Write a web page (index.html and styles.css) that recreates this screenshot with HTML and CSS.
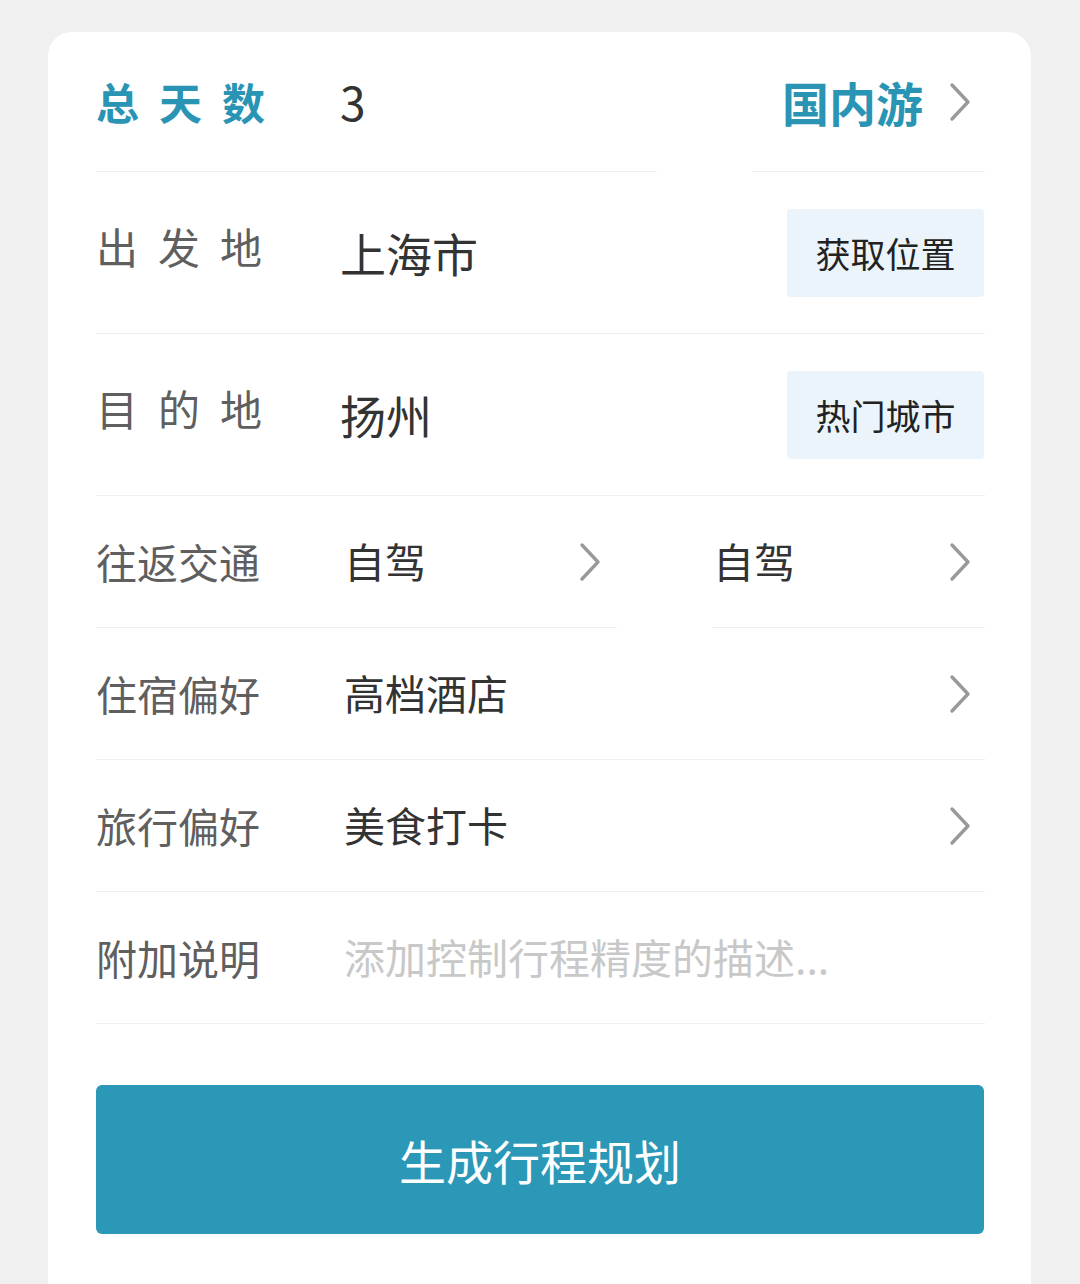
FILE: index.html
```html
<!DOCTYPE html>
<html lang="zh-CN">
<head>
    <meta charset="UTF-8">
    <meta name="viewport" content="width=device-width, initial-scale=1.0">
    <title>行程规划</title>
    <link rel="stylesheet" href="styles.css">
</head>
<body>
    <div class="card">
        <!-- 天数 + 出行类型 -->
        <div class="row row-top split">
            <div class="cell cell-days">
                <span class="label spaced accent">总天数</span>
                <span class="value big">3</span>
            </div>
            <div class="cell cell-type">
                <span class="type-text">国内游</span>
                <svg class="chevron" viewBox="0 0 22 40"><path d="M3 3 L19 20 L3 37"/></svg>
            </div>
        </div>

        <div class="row row-tall">
            <span class="label spaced raised">出发地</span>
            <span class="value big">上海市</span>
            <button class="chip">获取位置</button>
        </div>

        <div class="row row-tall">
            <span class="label spaced raised">目的地</span>
            <span class="value big">扬州</span>
            <button class="chip">热门城市</button>
        </div>

        <!-- 去程 / 返程 -->
        <div class="row split">
            <div class="cell cell-go">
                <span class="label">往返交通</span>
                <span class="value">自驾</span>
                <svg class="chevron" viewBox="0 0 22 40"><path d="M3 3 L19 20 L3 37"/></svg>
            </div>
            <div class="cell cell-back">
                <span class="value">自驾</span>
                <svg class="chevron" viewBox="0 0 22 40"><path d="M3 3 L19 20 L3 37"/></svg>
            </div>
        </div>

        <div class="row">
            <span class="label">住宿偏好</span>
            <span class="value">高档酒店</span>
            <svg class="chevron" viewBox="0 0 22 40"><path d="M3 3 L19 20 L3 37"/></svg>
        </div>

        <div class="row">
            <span class="label">旅行偏好</span>
            <span class="value">美食打卡</span>
            <svg class="chevron" viewBox="0 0 22 40"><path d="M3 3 L19 20 L3 37"/></svg>
        </div>

        <div class="row">
            <span class="label">附加说明</span>
            <span class="value placeholder">添加控制行程精度的描述...</span>
        </div>

        <button class="submit">生成行程规划</button>
    </div>
</body>
</html>
```

FILE: styles.css
```css
body {
    margin: 0;
    padding: 32px 49px 0 48px;
    background-color: #f0f0f0;
    font-family: "Noto Sans CJK SC", "Noto Sans", sans-serif;
    color: #333;
}
.card {
    background-color: #fff;
    border-radius: 24px 24px 0 0;
    padding: 0 46px 60px 48px;
    min-height: 1300px;
    box-sizing: border-box;
}
.row {
    display: flex;
    align-items: center;
    height: 132px;
    border-bottom: 1px solid #eeeeee;
    box-sizing: border-box;
}
.row-top {
    height: 140px;
}
.row-tall {
    height: 162px;
}
.row.split {
    border-bottom: none;
    justify-content: space-between;
}
.cell {
    display: flex;
    align-items: center;
    height: 100%;
    border-bottom: 1px solid #eeeeee;
    box-sizing: border-box;
}
.cell-days {
    width: 561px;
}
.cell-type {
    width: 233px;
    justify-content: flex-end;
    padding-right: 14px;
}
.cell-go {
    width: 521px;
    padding-right: 16px;
}
.cell-back {
    width: 273px;
    padding-left: 1px;
    padding-right: 14px;
}
.label {
    width: 248px;
    flex-shrink: 0;
    font-size: 41px;
    color: #5f5f5f;
    line-height: 1;
}
.label.spaced {
    width: 244px;
    letter-spacing: 20px;
    font-size: 42px;
}
.label.raised {
    margin-bottom: 14px;
}
.label.accent {
    color: #2a94b5;
    font-weight: 700;
    font-size: 43px;
}
.value {
    flex: 1;
    font-size: 41px;
    color: #333;
    line-height: 1;
    margin-bottom: 2px;
}
.value.big {
    font-size: 46px;
}
.value.placeholder {
    color: #c8c8c8;
}
.cell-back .value {
    flex: 1;
}
.type-text {
    font-size: 47px;
    font-weight: 700;
    color: #2a94b5;
    margin-right: 26px;
    line-height: 1;
}
.chevron {
    width: 22px;
    height: 40px;
    flex-shrink: 0;
    margin-right: 14px;
}
.cell .chevron {
    margin-right: 0;
}
.chevron path {
    fill: none;
    stroke: #999;
    stroke-width: 3.4;
    stroke-linecap: round;
    stroke-linejoin: round;
}
.chip {
    width: 197px;
    height: 88px;
    border: none;
    border-radius: 4px;
    background-color: #ebf4fa;
    color: #222;
    font-family: inherit;
    font-size: 35px;
    padding: 0;
    margin-right: 1px;
}
.submit {
    display: block;
    width: 888px;
    height: 149px;
    margin-top: 61px;
    border: none;
    border-radius: 6px;
    background-color: #2b98b8;
    color: #fff;
    font-family: inherit;
    font-size: 47px;
    cursor: pointer;
}
```
